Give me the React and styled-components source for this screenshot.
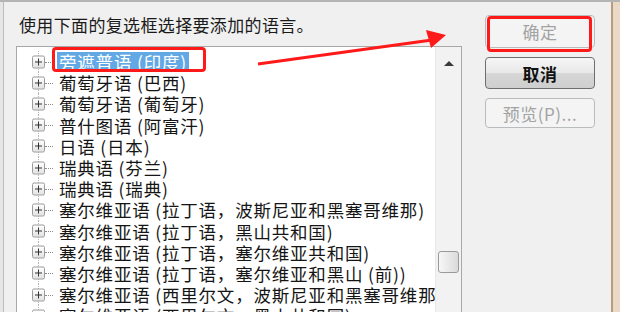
import React from 'react';
import styled, { createGlobalStyle } from 'styled-components';

const GlobalStyle = createGlobalStyle`
  html, body {
    margin: 0;
    padding: 0;
    overflow: hidden;
  }
  body {
    font-family: "Noto Sans CJK SC", "Liberation Sans", sans-serif;
  }
`;

const Window = styled.div`
  position: relative;
  width: 620px;
  height: 312px;
  box-sizing: border-box;
  display: flex;
  background: #f0f0f0;
  border-top: 2px solid #b4b4b4;
  overflow: hidden;
`;

const LeftEdge = styled.div`
  width: 3px;
  background: #e6e6e6;
  border-right: 1px solid #bcbcbc;
  flex-shrink: 0;
`;

const Main = styled.div`
  display: flex;
  flex-direction: column;
  padding: 12px 0 0 12px;
  width: 446px;
  flex-shrink: 0;
`;

const Title = styled.div`
  font-size: 17px;
  line-height: 22px;
  height: 22px;
  color: #1a1a1a;
  padding-left: 3px;
  letter-spacing: 0.35px;
  margin-bottom: 10px;
`;

const ListBox = styled.div`
  flex: 1;
  display: flex;
  background: #fff;
  border: 1px solid #a8a8a8;
  border-bottom: none;
`;

const Tree = styled.div`
  flex: 1;
  padding: 4px 0 0 15px;
  position: relative;
  overflow: hidden;
`;

const Row = styled.div`
  position: relative;
  display: flex;
  align-items: center;
  height: 21.2px;
  font-size: 17.5px;
  color: #151515;
  white-space: nowrap;
  letter-spacing: 0.8px;
`;

const Branch = styled.div`
  position: relative;
  width: 24px;
  height: 100%;
  flex-shrink: 0;
  &::before {
    content: "";
    position: absolute;
    left: 6px;
    top: 0;
    bottom: 0;
    border-left: 1px dotted #b4b4b4;
  }
  &::after {
    content: "";
    position: absolute;
    left: 13px;
    width: 8px;
    top: 50%;
    border-top: 1px dotted #8a8a8a;
  }
`;

const Expander = styled.span`
  position: absolute;
  left: 0;
  top: 50%;
  transform: translateY(-50%);
  width: 11px;
  height: 11px;
  border: 1px solid #9a9a9a;
  border-radius: 2px;
  background: linear-gradient(#ffffff, #e2e2e2);
  z-index: 1;
  &::before {
    content: "";
    position: absolute;
    left: 2px;
    right: 2px;
    top: 5px;
    border-top: 1px solid #333;
  }
  &::after {
    content: "";
    position: absolute;
    top: 2px;
    bottom: 2px;
    left: 5px;
    border-left: 1px solid #333;
  }
`;

const Label = styled.span`
  display: inline-block;
  height: 19px;
  padding: 0 2px;
  margin-left: 1px;
  line-height: 19px;
  background: ${(p) => (p.$selected ? '#62a8e4' : 'transparent')};
  color: ${(p) => (p.$selected ? '#ffffff' : 'inherit')};
`;

const Mark = styled.div`
  position: absolute;
  border: 3px solid #ff1a1a;
  border-radius: 4px;
  pointer-events: none;
`;

const ScrollBar = styled.div`
  width: 25px;
  background: #f2f2f2;
  border-left: 1px solid #e8e8e8;
  display: flex;
  flex-direction: column;
  align-items: center;
  flex-shrink: 0;
`;

const ArrowUp = styled.div`
  margin-top: 14px;
  width: 0;
  height: 0;
  border-left: 5px solid transparent;
  border-right: 5px solid transparent;
  border-bottom: 5px solid #3a3a3a;
`;

const Thumb = styled.div`
  margin-top: 185px;
  width: 21px;
  height: 22px;
  box-sizing: border-box;
  border: 1px solid #9a9a9a;
  border-radius: 3px;
  background: linear-gradient(90deg, #f7f7f7, #dadada);
`;

const Side = styled.div`
  display: flex;
  flex-direction: column;
  gap: 9px;
  padding: 13px 0 0 23px;
  width: 110px;
  flex-shrink: 0;
`;

const Button = styled.div`
  position: relative;
  height: ${(p) => p.$h}px;
  box-sizing: border-box;
  display: flex;
  align-items: center;
  justify-content: center;
  font-size: 17px;
  border-radius: 4px;
  border: 1px solid ${(p) => (p.$disabled ? '#b8bcbf' : '#6e6e6e')};
  background: ${(p) =>
    p.$disabled
      ? '#f4f4f4'
      : 'linear-gradient(#f6f6f6 0%, #e8e8e8 50%, #d6d6d6 52%, #cfcfcf 100%)'};
  color: ${(p) => (p.$disabled ? '#a3a3a3' : '#111')};
  font-weight: ${(p) => (p.$bold ? 700 : 400)};
  letter-spacing: 0.5px;
`;

const RightFrame = styled.div`
  margin-left: auto;
  width: 7px;
  flex-shrink: 0;
  border-left: 2px solid #b89c7c;
  background: #ead9c6;
`;

const Overlay = styled.svg`
  position: absolute;
  left: 0;
  top: 0;
  pointer-events: none;
`;

const items = [
  '旁遮普语 (印度)',
  '葡萄牙语 (巴西)',
  '葡萄牙语 (葡萄牙)',
  '普什图语 (阿富汗)',
  '日语 (日本)',
  '瑞典语 (芬兰)',
  '瑞典语 (瑞典)',
  '塞尔维亚语 (拉丁语，波斯尼亚和黑塞哥维那)',
  '塞尔维亚语 (拉丁语，黑山共和国)',
  '塞尔维亚语 (拉丁语，塞尔维亚共和国)',
  '塞尔维亚语 (拉丁语，塞尔维亚和黑山 (前))',
  '塞尔维亚语 (西里尔文，波斯尼亚和黑塞哥维那',
  '塞尔维亚语 (西里尔文，黑山共和国)',
];

export default function App() {
  return (
    <>
      <GlobalStyle />
      <Window>
        <LeftEdge />
        <Main>
          <Title>使用下面的复选框选择要添加的语言。</Title>
          <ListBox>
            <Tree>
              {items.map((t, i) => (
                <Row key={i}>
                  <Branch>
                    <Expander />
                  </Branch>
                  <Label $selected={i === 0}>{t}</Label>
                </Row>
              ))}
              <Mark style={{ left: 35, top: 0, width: 148, height: 19 }} />
            </Tree>
            <ScrollBar>
              <ArrowUp />
              <Thumb />
            </ScrollBar>
          </ListBox>
        </Main>
        <Side>
          <Button $h={33} $disabled>
            确定
            <Mark style={{ left: 1, top: 0, width: 99, height: 30 }} />
          </Button>
          <Button $h={32} $bold>取消</Button>
          <Button $h={30} $disabled>预览(P)...</Button>
        </Side>
        <RightFrame />
        <Overlay width="620" height="312">
          <line x1="258" y1="62" x2="432" y2="38" stroke="#ff1a1a" strokeWidth="3" />
          <polygon points="446,33 426,28 431,46" fill="#ff1a1a" />
        </Overlay>
      </Window>
    </>
  );
}
